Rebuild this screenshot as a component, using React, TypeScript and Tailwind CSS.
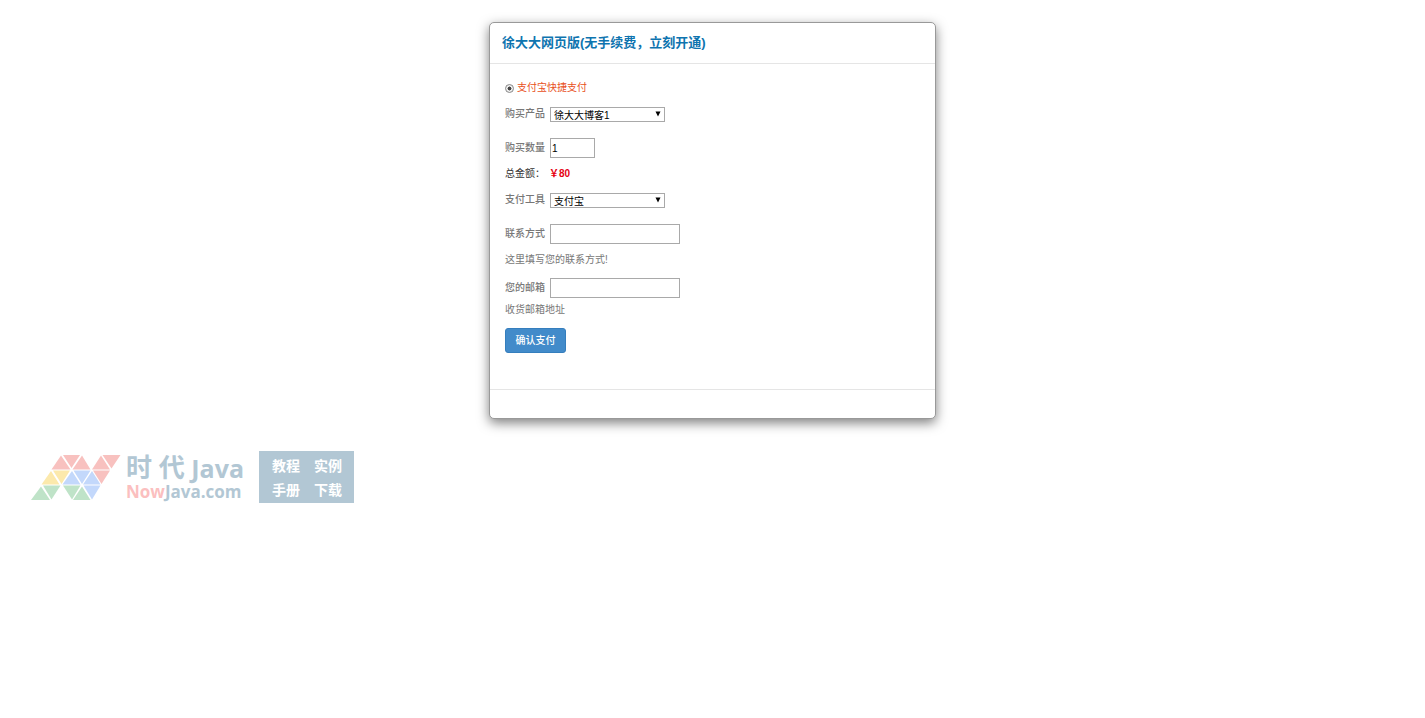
import { useState } from "react";

const PRICE = 80;

const RED = "#f8c1bf";
const YELLOW = "#fce9ac";
const BLUE = "#c3d8fb";
const GREEN = "#bfe3c8";

const triangles = [
  { points: "30,0.5 20.5,14.5 39.5,14.5", fill: RED },
  { points: "32,0 49,0 40.5,13", fill: RED },
  { points: "51,0.5 41.5,14.5 59.5,14.5", fill: RED },
  { points: "70,0.5 61,14.5 79,14.5", fill: RED },
  { points: "71.5,0 89.5,0 80.5,13.5", fill: RED },
  { points: "20,16 10.5,29.5 28.5,29.5", fill: YELLOW },
  { points: "22,15.5 39,15.5 30.5,29", fill: YELLOW },
  { points: "41,16 31.5,29.5 49.5,29.5", fill: BLUE },
  { points: "42.5,15.5 59.5,15.5 51,29", fill: BLUE },
  { points: "61,16 52,29.5 69.5,29.5", fill: BLUE },
  { points: "62,15.5 79,15.5 70.5,29", fill: RED },
  { points: "10,31.5 0,45 19,45", fill: GREEN },
  { points: "12,30.5 29.5,30.5 20.5,44.5", fill: GREEN },
  { points: "32,30.5 49.5,30.5 41,44.5", fill: GREEN },
  { points: "51,31.5 42,45 59.5,45", fill: GREEN },
  { points: "52.5,30.5 69.5,30.5 61,44.5", fill: BLUE },
];

const fieldClass = "border border-[#a9a9a9] bg-white text-black";
const selectClass = "block appearance-none w-[115px] h-[15px] pl-[3px] pt-0.5 leading-3";
const labelClass = "w-[45px] font-medium text-[#777]";

const Arrow = () => (
  <svg width="6" height="6" viewBox="0 0 6 6" className="absolute right-1 top-1 pointer-events-none">
    <path d="M0.5 0.5h5L3 5.5z" fill="#000" />
  </svg>
);

const Watermark = () => {
  return (
    <div className="mt-8 ml-[31px] flex items-start text-[#b2c7d4] font-bold">
      <svg width="90" height="46" viewBox="0 0 90 46" className="mt-1 shrink-0">
        {triangles.map((t) => (
          <polygon key={t.points} points={t.points} fill={t.fill} />
        ))}
      </svg>
      <div className="ml-[5px] pt-px w-[118px] shrink-0 whitespace-nowrap">
        <div className="flex items-center justify-between text-[26px] leading-8">
          <span>时</span>
          <span>代</span>
          <span className="text-[25px] font-['Open_Sans',sans-serif]">Java</span>
        </div>
        <div className="text-[17px] leading-4 font-['Open_Sans',sans-serif]">
          <span className="text-[#fbbfbf]">Now</span>Java.com
        </div>
      </div>
      <div className="ml-[15px] grid grid-cols-[28px_28px] gap-x-[14px] pl-[13px] py-[3px] w-[95px] h-[52px] shrink-0 bg-[#b2c7d4] text-white text-[14px] leading-6 whitespace-nowrap">
        <span>教程</span>
        <span>实例</span>
        <span>手册</span>
        <span>下载</span>
      </div>
    </div>
  );
};

const App = () => {
  const [count, setCount] = useState("1");

  return (
    <div className="bg-white min-h-screen pt-[22px] text-[10px] leading-4 text-[#777] font-['Liberation_Sans','Noto_Sans_CJK_SC',sans-serif]">
      <div className="w-[447px] max-w-full mx-auto bg-white border border-[#999] rounded-[5px] shadow-[0_4px_12px_rgba(0,0,0,0.5)]">
        <div className="px-3 h-[41px] flex items-center border-b border-[#e5e5e5]">
          <h4 className="text-[13px] leading-5 font-bold text-[#0e74af]">
            徐大大网页版(无手续费，立刻开通)
          </h4>
        </div>

        <form className="px-[15px] pt-4 pb-9" onSubmit={(e) => e.preventDefault()}>
          <label className="flex items-center gap-[3px] text-[#e8501c]">
            <input
              type="radio"
              name="pay"
              defaultChecked
              className="appearance-none size-[9px] rounded-full border border-[#888] bg-[radial-gradient(circle,#444_35%,#eee_45%)]"
            />
            支付宝快捷支付
          </label>

          <div className="mt-2.5 flex items-center">
            <label htmlFor="product" className={labelClass}>购买产品</label>
            <div className="relative">
              <select id="product" className={`${fieldClass} ${selectClass}`}>
                <option>徐大大博客1</option>
              </select>
              <Arrow />
            </div>
          </div>

          <div className="mt-4 flex items-center">
            <label htmlFor="count" className={labelClass}>购买数量</label>
            <input
              id="count"
              value={count}
              onChange={(e) => setCount(e.target.value)}
              className={`${fieldClass} w-[45px] h-5 px-px`}
            />
          </div>

          <p className="mt-2 text-[#333]">
            总金额：
            <span className="ml-1 font-bold text-[#e60012]">￥{PRICE * (Number(count) || 0)}</span>
          </p>

          <div className="mt-2.5 flex items-center">
            <label htmlFor="tool" className={labelClass}>支付工具</label>
            <div className="relative">
              <select id="tool" className={`${fieldClass} ${selectClass}`}>
                <option>支付宝</option>
              </select>
              <Arrow />
            </div>
          </div>

          <div className="mt-4 flex items-center">
            <label htmlFor="contact" className={labelClass}>联系方式</label>
            <input id="contact" className={`${fieldClass} w-[130px] h-5 px-px`} />
          </div>
          <p className="mt-2">这里填写您的联系方式!</p>

          <div className="mt-2.5 flex items-center">
            <label htmlFor="email" className={labelClass}>您的邮箱</label>
            <input id="email" type="email" className={`${fieldClass} w-[130px] h-5 px-px`} />
          </div>
          <p className="mt-1">收货邮箱地址</p>

          <button
            type="submit"
            className="mt-2.5 block w-[61px] h-[25px] rounded-[3px] border border-[#357ebd] bg-[#428bca] text-white font-medium"
          >
            确认支付
          </button>
        </form>

        <div className="h-[29px] border-t border-[#e5e5e5]" />
      </div>

      <Watermark />
    </div>
  );
};

export default App;
